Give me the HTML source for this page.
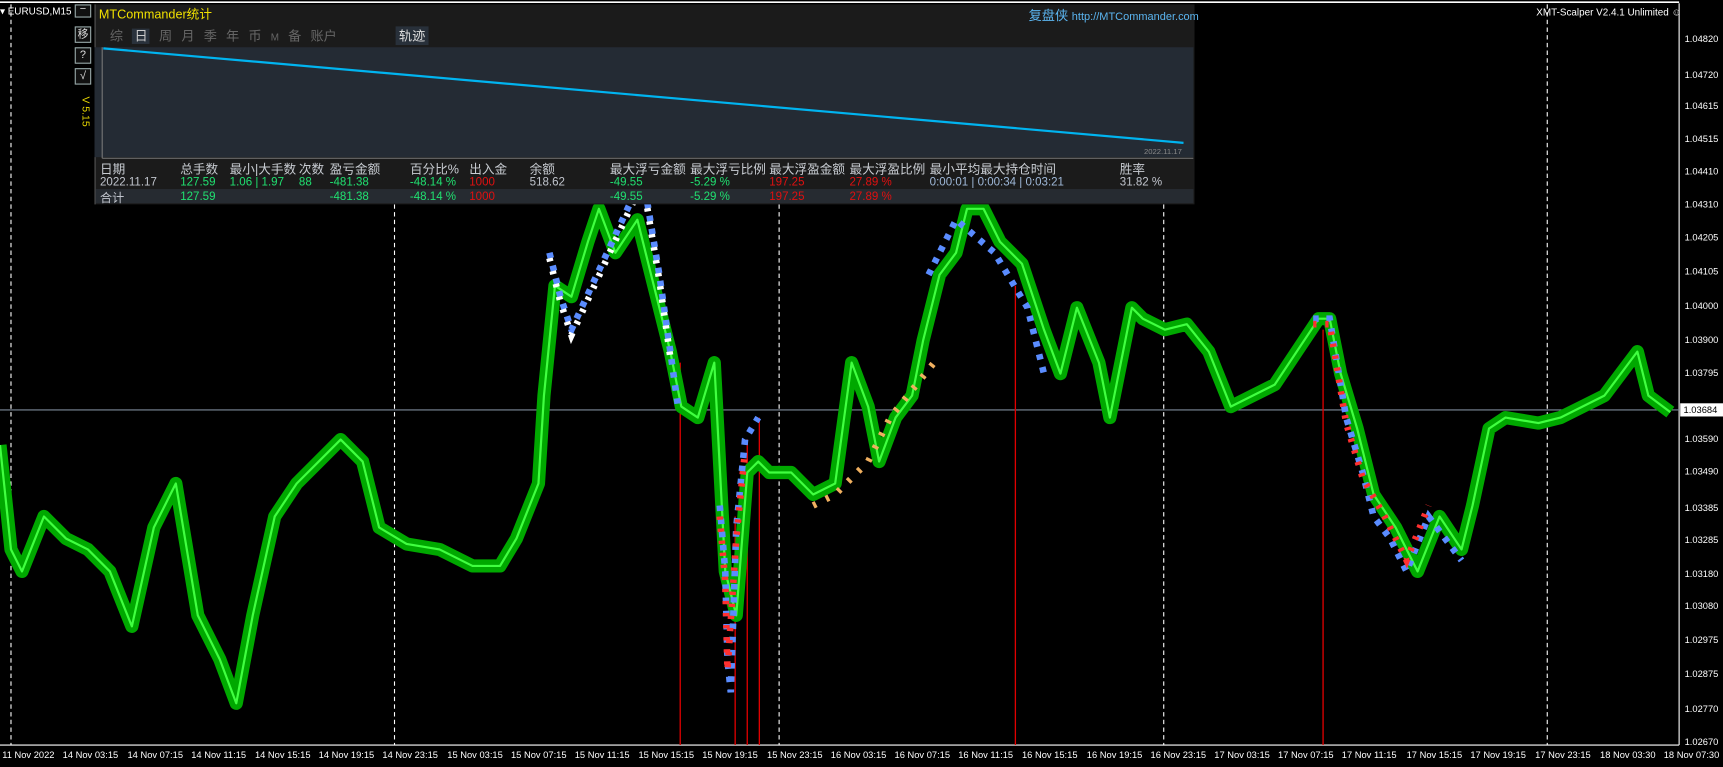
<!DOCTYPE html>
<html><head><meta charset="utf-8"><style>
body{margin:0;width:1723px;height:767px;background:#000;overflow:hidden;font-family:"Liberation Sans","Noto Sans CJK SC",sans-serif;position:relative}
#w{position:absolute;left:0;top:0;width:1568px;height:698px;transform:scale(1.0989);transform-origin:0 0}
.a{position:absolute;white-space:nowrap}
.pl{position:absolute;left:1533px;color:#fff;font-size:8.5px}
.tl{position:absolute;top:682px;color:#fff;font-size:8.5px}
.hd{position:absolute;top:146px;color:#c8ccd2;font-size:11.5px}
.v{position:absolute;font-size:10.5px}
.btn{position:absolute;left:68px;width:13px;height:13px;border:1px solid #9aa;color:#ddd;font-size:10px;text-align:center;line-height:13px;background:#111}
</style></head><body><div id="w">
<svg class="a" style="left:0;top:0" width="1568" height="698">
<line x1="0" y1="2" x2="1528" y2="2" stroke="#fff" stroke-width="1.5"/>
<line x1="1528" y1="3" x2="1528" y2="678" stroke="#fff"/>
<line x1="0" y1="678" x2="1528" y2="678" stroke="#fff"/>
<g stroke="#fff" stroke-dasharray="4,3">
<line x1="10" y1="4" x2="10" y2="678"/><line x1="359" y1="186" x2="359" y2="678"/><line x1="709" y1="186" x2="709" y2="678"/><line x1="1059" y1="186" x2="1059" y2="678"/><line x1="1408" y1="4" x2="1408" y2="678"/>
</g>
<line x1="0" y1="373" x2="1528" y2="373" stroke="#7d8a99"/>
<g stroke="#e00000" stroke-width="1.2">
<line x1="619" y1="330" x2="619" y2="678"/><line x1="669" y1="470" x2="669" y2="678"/><line x1="680" y1="400" x2="680" y2="678"/><line x1="691" y1="380" x2="691" y2="678"/><line x1="924" y1="260" x2="924" y2="678"/><line x1="1204" y1="300" x2="1204" y2="678"/>
</g>
<polyline fill="none" stroke="#00a800" stroke-width="12" stroke-linejoin="round" points="0,405 10,500 20,520 40,470 60,490 80,500 100,520 120,570 140,480 160,440 180,560 200,600 215,640 230,560 250,470 270,440 290,420 310,400 330,420 345,480 370,495 400,500 430,515 455,515 470,490 490,440 495,360 505,260 520,270 535,220 545,190 560,230 580,200 595,260 610,320 620,370 635,380 650,330 660,520 670,560 680,430 690,420 700,430 720,430 740,450 760,440 775,330 790,370 800,420 815,380 830,360 840,310 855,250 870,230 880,190 895,190 910,220 930,240 950,300 965,340 980,280 1000,330 1010,380 1020,330 1030,280 1040,290 1060,300 1080,295 1100,320 1120,370 1140,360 1160,350 1180,320 1200,290 1210,290 1220,340 1235,390 1250,450 1270,480 1290,520 1310,470 1330,500 1340,460 1355,390 1370,380 1400,385 1420,380 1440,370 1460,360 1475,340 1490,320 1500,360 1520,375"/>
<polyline fill="none" stroke="#40ff40" stroke-width="2" stroke-linejoin="round" points="0,405 10,500 20,520 40,470 60,490 80,500 100,520 120,570 140,480 160,440 180,560 200,600 215,640 230,560 250,470 270,440 290,420 310,400 330,420 345,480 370,495 400,500 430,515 455,515 470,490 490,440 495,360 505,260 520,270 535,220 545,190 560,230 580,200 595,260 610,320 620,370 635,380 650,330 660,520 670,560 680,430 690,420 700,430 720,430 740,450 760,440 775,330 790,370 800,420 815,380 830,360 840,310 855,250 870,230 880,190 895,190 910,220 930,240 950,300 965,340 980,280 1000,330 1010,380 1020,330 1030,280 1040,290 1060,300 1080,295 1100,320 1120,370 1140,360 1160,350 1180,320 1200,290 1210,290 1220,340 1235,390 1250,450 1270,480 1290,520 1310,470 1330,500 1340,460 1355,390 1370,380 1400,385 1420,380 1440,370 1460,360 1475,340 1490,320 1500,360 1520,375"/>
<g fill="none" stroke-width="6" stroke-dasharray="5,7">
<polyline stroke="#5a8cff" points="500,230 510,270 520,300 585,160 600,250 610,320 617,370"/>
<polyline stroke="#ffffff" stroke-dasharray="3,9" points="500,235 510,275 520,305 585,165 600,255 610,325"/>
<polyline stroke="#5a8cff" points="655,460 660,520 662,600 665,630 670,480 678,400 690,380"/>
<polyline stroke="#ff3030" stroke-dasharray="3,8" points="655,470 660,530 662,610 670,490 678,410"/>
<polyline stroke="#5a8cff" points="845,250 855,230 870,200 905,230 935,280 950,340"/>
<polyline stroke="#5a8cff" points="1195,290 1210,290 1225,380 1240,430 1250,470 1265,490 1280,520 1300,470 1330,510"/>
<polyline stroke="#ff3030" stroke-dasharray="3,8" points="1195,295 1210,295 1225,385 1240,435 1260,470 1280,510 1300,460"/>
<polyline stroke="#f0b060" stroke-dasharray="3,10" points="740,460 760,450 790,420 810,380 850,330"/>
</g>
</svg>
<div class="a" style="left:0;top:5px;color:#fff;font-size:9px">▾ EURUSD,M15</div>
<div class="btn" style="top:4px;height:10px;line-height:8px">−</div>
<div class="btn" style="top:24px">移</div>
<div class="btn" style="top:43px">?</div>
<div class="btn" style="top:62px">√</div>
<div class="a" style="left:64px;top:96px;color:#e8d800;font-size:9.5px;transform:rotate(90deg)">V 5.15</div>
<div class="a" style="left:86px;top:4px;width:1000px;height:182px;background:#1b1b1b;border-left:1px solid #555"></div>
<div class="a" style="left:90px;top:5px;color:#f0e000;font-size:11.5px">MTCommander统计</div>
<div class="a" style="left:936px;top:5px;font-size:12px;color:#5bb5f0">复盘侠 <span style="font-size:10px">http://MTCommander.com</span></div>
<div class="a" style="left:100px;top:24px;font-size:12px;color:#666;word-spacing:5px">综 <span style="background:#2a323c;color:#ccc;padding:0 2px">日</span> 周 月 季 年 币 <span style="font-size:9px">M</span> 备 账户</div>
<div class="a" style="left:360px;top:24px;font-size:12px;color:#ddd;background:#28303a;padding:0 3px">轨迹</div>
<div class="a" style="left:86px;top:43px;width:1000px;height:100px;background:#242b34"></div>
<svg class="a" style="left:86px;top:40px" width="1000" height="105">
<line x1="7" y1="3" x2="7" y2="104" stroke="#777"/><line x1="7" y1="104" x2="1000" y2="104" stroke="#777"/>
<line x1="8" y1="4" x2="991" y2="90" stroke="#00b4f0" stroke-width="2"/>
<text x="955" y="100" fill="#888" font-size="7" font-family="Liberation Sans">2022.11.17</text>
</svg>
<div class="hd" style="left:91px">日期</div><div class="hd" style="left:164px">总手数</div><div class="hd" style="left:209px">最小|大手数</div><div class="hd" style="left:272px">次数</div><div class="hd" style="left:300px">盈亏金额</div><div class="hd" style="left:373px">百分比%</div><div class="hd" style="left:427px">出入金</div><div class="hd" style="left:482px">余额</div><div class="hd" style="left:555px">最大浮亏金额</div><div class="hd" style="left:628px">最大浮亏比例</div><div class="hd" style="left:700px">最大浮盈金额</div><div class="hd" style="left:773px">最大浮盈比例</div><div class="hd" style="left:846px">最小平均最大持仓时间</div><div class="hd" style="left:1019px">胜率</div>
<div class="v" style="left:91px;top:160px;color:#c0c4cc">2022.11.17</div>
<div class="v" style="left:164px;top:160px;color:#20e070">127.59</div>
<div class="v" style="left:209px;top:160px;color:#20e070">1.06 | 1.97</div>
<div class="v" style="left:272px;top:160px;color:#20e070">88</div>
<div class="v" style="left:300px;top:160px;color:#20e070">-481.38</div>
<div class="v" style="left:373px;top:160px;color:#20e070">-48.14 %</div>
<div class="v" style="left:427px;top:160px;color:#e01010">1000</div>
<div class="v" style="left:482px;top:160px;color:#c0c4cc">518.62</div>
<div class="v" style="left:555px;top:160px;color:#20e070">-49.55</div>
<div class="v" style="left:628px;top:160px;color:#20e070">-5.29 %</div>
<div class="v" style="left:700px;top:160px;color:#e01010">197.25</div>
<div class="v" style="left:773px;top:160px;color:#e01010">27.89 %</div>
<div class="v" style="left:846px;top:160px;color:#9fb8d8">0:00:01 | 0:00:34 | 0:03:21</div>
<div class="v" style="left:1019px;top:160px;color:#c0c4cc">31.82 %</div>
<div class="a" style="left:87px;top:172px;width:999px;height:13px;background:#262b31"></div>
<div class="v" style="left:91px;top:172px;color:#c0c4cc;font-size:11px">合计</div>
<div class="v" style="left:164px;top:173px;color:#20e070">127.59</div>
<div class="v" style="left:300px;top:173px;color:#20e070">-481.38</div>
<div class="v" style="left:373px;top:173px;color:#20e070">-48.14 %</div>
<div class="v" style="left:427px;top:173px;color:#e01010">1000</div>
<div class="v" style="left:555px;top:173px;color:#20e070">-49.55</div>
<div class="v" style="left:628px;top:173px;color:#20e070">-5.29 %</div>
<div class="v" style="left:700px;top:173px;color:#e01010">197.25</div>
<div class="v" style="left:773px;top:173px;color:#e01010">27.89 %</div>
<div class="a" style="left:1398px;top:6px;color:#fff;font-size:9px">XMT-Scalper V2.4.1 Unlimited ☺</div>
<div class="pl" style="top:30px">1.04820</div><div class="pl" style="top:63px">1.04720</div><div class="pl" style="top:91px">1.04615</div><div class="pl" style="top:121px">1.04515</div><div class="pl" style="top:151px">1.04410</div><div class="pl" style="top:181px">1.04310</div><div class="pl" style="top:211px">1.04205</div><div class="pl" style="top:242px">1.04105</div><div class="pl" style="top:273px">1.04000</div><div class="pl" style="top:304px">1.03900</div><div class="pl" style="top:334px">1.03795</div><div class="pl" style="top:394px">1.03590</div><div class="pl" style="top:424px">1.03490</div><div class="pl" style="top:457px">1.03385</div><div class="pl" style="top:486px">1.03285</div><div class="pl" style="top:517px">1.03180</div><div class="pl" style="top:546px">1.03080</div><div class="pl" style="top:577px">1.02975</div><div class="pl" style="top:608px">1.02875</div><div class="pl" style="top:640px">1.02770</div><div class="pl" style="top:670px">1.02670</div>
<div class="a" style="left:1529px;top:367px;width:36px;height:12px;background:#fff;color:#000;font-size:8.5px;line-height:12px;padding-left:3px">1.03684</div>
<div class="tl" style="left:2px">11 Nov 2022</div><div class="tl" style="left:57px">14 Nov 03:15</div><div class="tl" style="left:116px">14 Nov 07:15</div><div class="tl" style="left:174px">14 Nov 11:15</div><div class="tl" style="left:232px">14 Nov 15:15</div><div class="tl" style="left:290px">14 Nov 19:15</div><div class="tl" style="left:348px">14 Nov 23:15</div><div class="tl" style="left:407px">15 Nov 03:15</div><div class="tl" style="left:465px">15 Nov 07:15</div><div class="tl" style="left:523px">15 Nov 11:15</div><div class="tl" style="left:581px">15 Nov 15:15</div><div class="tl" style="left:639px">15 Nov 19:15</div><div class="tl" style="left:698px">15 Nov 23:15</div><div class="tl" style="left:756px">16 Nov 03:15</div><div class="tl" style="left:814px">16 Nov 07:15</div><div class="tl" style="left:872px">16 Nov 11:15</div><div class="tl" style="left:930px">16 Nov 15:15</div><div class="tl" style="left:989px">16 Nov 19:15</div><div class="tl" style="left:1047px">16 Nov 23:15</div><div class="tl" style="left:1105px">17 Nov 03:15</div><div class="tl" style="left:1163px">17 Nov 07:15</div><div class="tl" style="left:1221px">17 Nov 11:15</div><div class="tl" style="left:1280px">17 Nov 15:15</div><div class="tl" style="left:1338px">17 Nov 19:15</div><div class="tl" style="left:1397px">17 Nov 23:15</div><div class="tl" style="left:1456px">18 Nov 03:30</div><div class="tl" style="left:1514px">18 Nov 07:30</div>
</div></body></html>
